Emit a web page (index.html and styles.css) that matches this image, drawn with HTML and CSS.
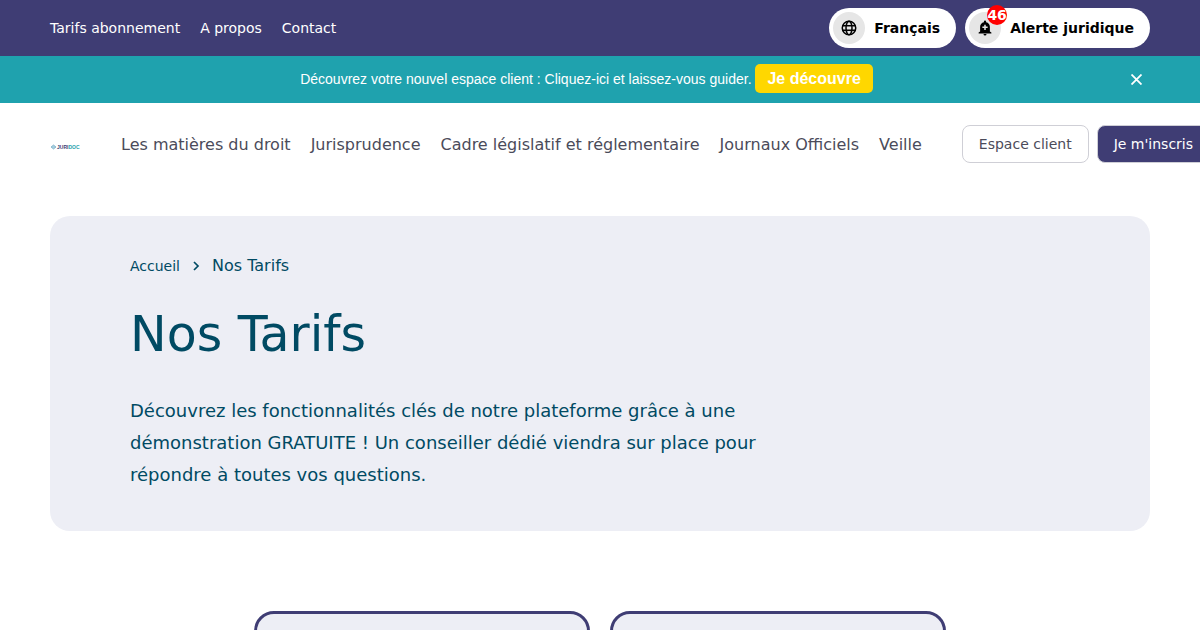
FILE: index.html
```
<!DOCTYPE html>
<html lang="fr">
<head>
    <meta charset="UTF-8">
    <meta name="viewport" content="width=device-width, initial-scale=1.0">
    <title>Nos Tarifs</title>
    <link rel="stylesheet" href="styles.css">
</head>
<body>
    <div class="topbar">
        <nav class="topbar-links">
            <a href="#">Tarifs abonnement</a>
            <a href="#">A propos</a>
            <a href="#">Contact</a>
        </nav>
        <div class="topbar-actions">
            <button class="pill" type="button">
                <span class="pill-icon">
                    <svg width="18" height="18" viewBox="0 0 24 24" fill="none" stroke="currentColor" stroke-width="2">
                        <circle cx="12" cy="12" r="9"/>
                        <ellipse cx="12" cy="12" rx="4" ry="9"/>
                        <path d="M3.5 9h17M3.5 15h17"/>
                    </svg>
                </span>
                Français
            </button>
            <button class="pill" type="button">
                <span class="pill-icon">
                    <svg width="18" height="18" viewBox="0 0 24 24" fill="currentColor" fill-rule="evenodd">
                        <path d="M10 20h4a2 2 0 0 1-4 0zM18.500 16.500v-6c0-3.200-1.800-5.600-5-6.300V3.500a1.500 1.500 0 0 0-3 0v.7c-3.200.7-5 3.100-5 6.300v6L3.500 18v1.300h17V18zM11 7.500h2V10h2.500v2H13v2.500h-2V12H8.500v-2H11z"/>
                    </svg>
                    <span class="badge">46</span>
                </span>
                Alerte juridique
            </button>
        </div>
    </div>

    <div class="banner">
        <p>Découvrez votre nouvel espace client : Cliquez-ici et laissez-vous guider. <a class="banner-link" href="#">Je découvre</a></p>
        <button class="banner-close" type="button" aria-label="Fermer">
            <svg width="11" height="11" viewBox="0 0 11 11" stroke="currentColor" stroke-width="1.800">
                <path d="M.5.5l10 10M10.500.5l-10 10"/>
            </svg>
        </button>
    </div>

    <header class="header">
        <a class="logo" href="#" aria-label="Juridoc">
            <svg width="32" height="8" viewBox="0 0 32 8">
                <path d="M1 4l2.500-2 2.500 2-2.500 2z" fill="#a9cfe0" stroke="#6fa9c4" stroke-width=".7"/>
                <text x="7" y="6"><tspan fill="#3f3d74">JURI</tspan><tspan fill="#1fa2ae">DOC</tspan></text>
            </svg>
        </a>
        <nav class="main-nav">
            <a href="#">Les matières du droit</a>
            <a href="#">Jurisprudence</a>
            <a href="#">Cadre législatif et réglementaire</a>
            <a href="#">Journaux Officiels</a>
            <a href="#">Veille</a>
        </nav>
        <div class="header-actions">
            <a class="btn" href="#">Espace client</a>
            <a class="btn btn-primary" href="#">Je m'inscris</a>
        </div>
    </header>

    <main>
        <section class="hero">
            <nav class="breadcrumb">
                <a href="#">Accueil</a>
                <svg width="8" height="10" viewBox="0 0 8 10" fill="none" stroke="currentColor" stroke-width="1.700">
                    <path d="M2 1l4 4-4 4"/>
                </svg>
                <span class="current">Nos Tarifs</span>
            </nav>
            <h1>Nos Tarifs</h1>
            <p>Découvrez les fonctionnalités clés de notre plateforme grâce à une démonstration GRATUITE ! Un conseiller dédié viendra sur place pour répondre à toutes vos questions.</p>
        </section>

        <section class="plans">
            <article class="plan"></article>
            <article class="plan"></article>
        </section>
    </main>
</body>
</html>
```
FILE: styles.css
```
* {
    box-sizing: border-box;
}

body {
    margin: 0;
    background-color: #fff;
    color: #4b4b5a;
    font-family: "DejaVu Sans", sans-serif;
    font-size: 16px;
    line-height: 24px;
    overflow-x: hidden;
}

a {
    color: inherit;
    text-decoration: none;
}

button {
    border: none;
    font-family: inherit;
    cursor: pointer;
}

/* Top bar */
.topbar {
    display: flex;
    justify-content: space-between;
    align-items: center;
    padding: 8px 50px;
    background-color: #3f3d74;
    color: #fff;
    font-size: 14px;
}

.topbar-links {
    display: flex;
    gap: 20px;
}

.topbar-actions {
    display: flex;
    gap: 9px;
}

.pill {
    display: flex;
    align-items: center;
    gap: 9px;
    padding: 4px 16px 4px 4px;
    border-radius: 20px;
    background-color: #fff;
    color: #000;
    font-size: 14px;
    font-weight: bold;
}

.pill-icon {
    position: relative;
    display: flex;
    align-items: center;
    justify-content: center;
    width: 32px;
    height: 32px;
    border-radius: 50%;
    background-color: #e6e6e6;
}

.badge {
    position: absolute;
    top: -7px;
    right: -6px;
    width: 20px;
    height: 20px;
    border-radius: 50%;
    background-color: #f00;
    color: #fff;
    font-size: 14px;
    line-height: 20px;
}

/* Banner */
.banner {
    display: flex;
    align-items: center;
    padding: 8px 50px;
    background-color: #1fa2ae;
    color: #fff;
    font-family: "Liberation Sans", Arial, sans-serif;
    font-size: 14px;
}

.banner p {
    flex: 1;
    margin: 0;
    line-height: 31px;
    text-align: center;
}

.banner-link {
    display: inline-block;
    padding: 0 12px;
    border-radius: 5px;
    background-color: #ffd700;
    font-size: 16px;
    font-weight: bold;
    line-height: 29px;
}

.banner-close {
    display: flex;
    padding: 8px;
    background: none;
    color: #fff;
}

/* Header */
.header {
    display: flex;
    align-items: center;
    padding: 22px 50px;
    white-space: nowrap;
}

.logo {
    display: flex;
    flex-shrink: 0;
    margin-right: 39px;
    padding-top: 6px;
}

.logo text {
    font-family: "Liberation Sans", Arial, sans-serif;
    font-size: 5px;
    font-weight: bold;
}

.main-nav {
    display: flex;
    gap: 20px;
    padding-top: 2px;
}

.header-actions {
    display: flex;
    gap: 8px;
    margin-left: 40px;
}

.btn {
    padding: 6px 16px;
    border: 1px solid #cfcfd6;
    border-radius: 8px;
    font-size: 14px;
}

.btn-primary {
    background-color: #3f3d74;
    color: #fff;
}

/* Hero */
.hero {
    margin: 31px 50px 80px;
    padding: 38px 80px 40px;
    border-radius: 20px;
    background-color: #edeef5;
    color: #004a63;
}

.breadcrumb {
    display: flex;
    align-items: center;
    gap: 12px;
    font-size: 14px;
}

.breadcrumb .current {
    font-size: 16px;
}

.hero h1 {
    margin: 27px 0 31px;
    font-size: 49px;
    font-weight: normal;
    line-height: 59px;
}

.hero p {
    max-width: 640px;
    margin: 0;
    font-size: 18px;
    line-height: 32px;
}

/* Plans */
.plans {
    display: flex;
    justify-content: center;
    gap: 20px;
    padding: 0 50px 80px;
}

.plan {
    flex: 0 1 336px;
    min-height: 400px;
    border: 3px solid #3f3d74;
    border-radius: 20px;
    background-color: #edeef5;
}
```
